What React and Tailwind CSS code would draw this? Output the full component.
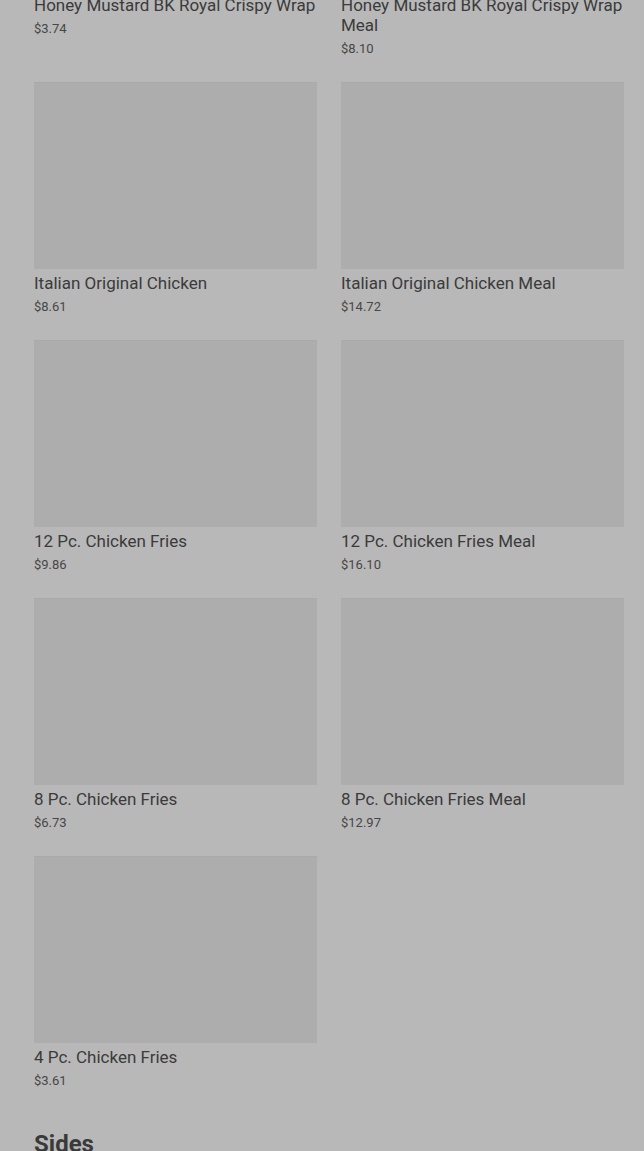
const items = [
    { name: "Honey Mustard BK Royal Crispy Wrap", price: "$3.74" },
    { name: "Honey Mustard BK Royal Crispy Wrap Meal", price: "$8.10" },
    { name: "Italian Original Chicken", price: "$8.61" },
    { name: "Italian Original Chicken Meal", price: "$14.72" },
    { name: "12 Pc. Chicken Fries", price: "$9.86" },
    { name: "12 Pc. Chicken Fries Meal", price: "$16.10" },
    { name: "8 Pc. Chicken Fries", price: "$6.73" },
    { name: "8 Pc. Chicken Fries Meal", price: "$12.97" },
    { name: "4 Pc. Chicken Fries", price: "$3.61" },
];

function MenuCard({ item }) {
    return (
        <div className="flex flex-col">
            <div className="h-[187px] bg-[#adadad] border-t border-[#a9a9a9]" />
            <h3 className="mt-[5px] text-[17px] leading-[19.5px] font-normal text-[#3b3b3b]">
                {item.name}
            </h3>
            <p className="mt-[3.5px] text-[13px] leading-[20px] text-[#474747]">{item.price}</p>
        </div>
    );
}

export default function App() {
    return (
        <div
            className="h-[1151px] overflow-hidden bg-[#b8b8b8] pl-[34px] pr-[20px]"
            style={{ fontFamily: "Roboto, 'Liberation Sans', sans-serif" }}
        >
            <div className="-mt-[196px] grid grid-cols-2 gap-x-[24px] gap-y-[23px]">
                {items.map((item) => (
                    <MenuCard key={item.name} item={item} />
                ))}
            </div>
            <h2 className="mt-[38px] text-[24px] leading-[30px] font-bold text-[#3a3a3a]">Sides</h2>
        </div>
    );
}
